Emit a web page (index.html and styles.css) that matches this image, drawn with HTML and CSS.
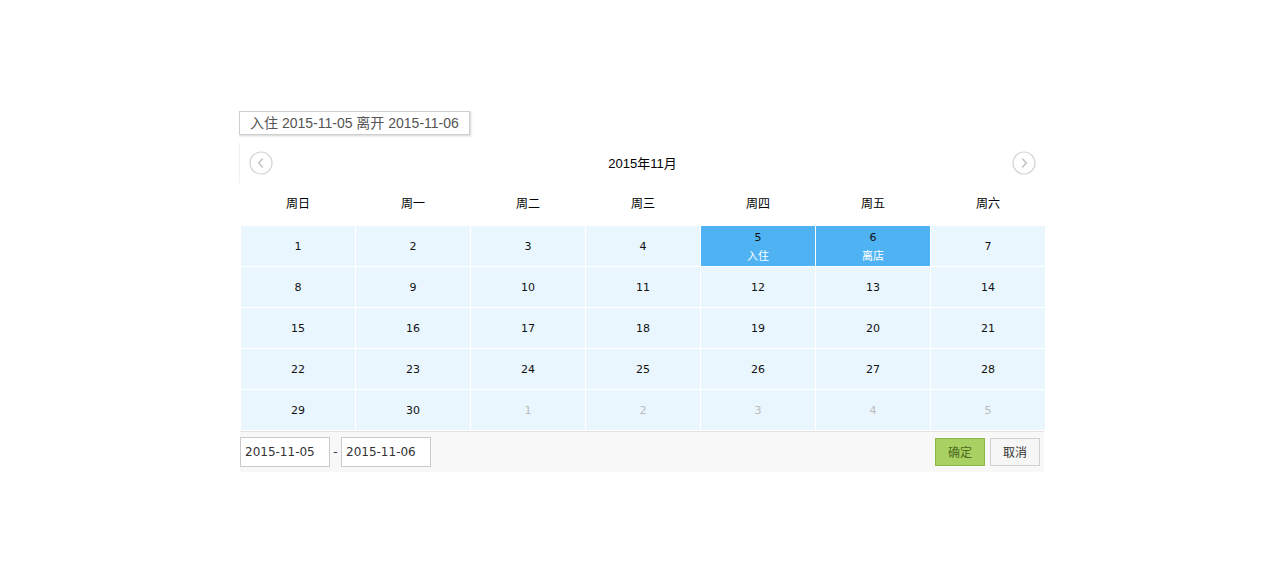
FILE: index.html
```html
<!DOCTYPE html>
<html lang="zh">
<head>
<meta charset="utf-8">
<link rel="stylesheet" href="styles.css">
</head>
<body>
<div class="wrap">
  <div class="trigger">入住 2015-11-05 离开 2015-11-06</div>
  <div class="cal">
    <div class="nav">
      <span class="arrow"><svg width="24" height="24" viewBox="0 0 24 24"><circle cx="12" cy="12" r="11" fill="#fff" stroke="#d6d6d6" stroke-width="1.2"/><path d="M13.8 7.5 L9.8 12 L13.8 16.5" fill="none" stroke="#c4c4c4" stroke-width="1.6"/></svg></span>
      <span class="title">2015年11月</span>
      <span class="arrow"><svg width="24" height="24" viewBox="0 0 24 24"><circle cx="12" cy="12" r="11" fill="#fff" stroke="#d6d6d6" stroke-width="1.2"/><path d="M10.2 7.5 L14.2 12 L10.2 16.5" fill="none" stroke="#c4c4c4" stroke-width="1.6"/></svg></span>
    </div>
    <div class="week">
      <span>周日</span><span>周一</span><span>周二</span><span>周三</span><span>周四</span><span>周五</span><span>周六</span>
    </div>
    <div class="days">
      <div class="d">1</div><div class="d">2</div><div class="d">3</div><div class="d">4</div>
      <div class="d sel">5<span class="tag">入住</span></div>
      <div class="d sel">6<span class="tag">离店</span></div>
      <div class="d">7</div>
      <div class="d">8</div><div class="d">9</div><div class="d">10</div><div class="d">11</div><div class="d">12</div><div class="d">13</div><div class="d">14</div>
      <div class="d">15</div><div class="d">16</div><div class="d">17</div><div class="d">18</div><div class="d">19</div><div class="d">20</div><div class="d">21</div>
      <div class="d">22</div><div class="d">23</div><div class="d">24</div><div class="d">25</div><div class="d">26</div><div class="d">27</div><div class="d">28</div>
      <div class="d">29</div><div class="d">30</div><div class="d off">1</div><div class="d off">2</div><div class="d off">3</div><div class="d off">4</div><div class="d off">5</div>
    </div>
    <div class="foot">
      <div class="range">
        <span class="inp">2015-11-05</span>
        <span class="dash">-</span>
        <span class="inp">2015-11-06</span>
      </div>
      <div class="btns">
        <span class="btn ok">确定</span>
        <span class="btn cancel">取消</span>
      </div>
    </div>
  </div>
</div>
</body>
</html>
```
FILE: styles.css
```css
html, body { margin: 0; padding: 0; background: #fff; }
body { font-family: "DejaVu Sans", "Noto Sans CJK SC", sans-serif; color: #000; }
.wrap { width: 805px; margin: 111px 0 0 240px; }
.trigger {
  display: inline-block;
  margin-left: -1px;
  height: 22px;
  line-height: 22px;
  padding: 0 10px;
  border: 1px solid #cfcfcf;
  box-shadow: 1px 1px 2px rgba(0,0,0,0.18);
  font-family: "Liberation Sans", "Noto Sans CJK SC", sans-serif;
  font-size: 14px;
  color: #555;
}
.cal { margin-top: 8px; }
.nav {
  height: 40px;
  display: flex;
  align-items: center;
  justify-content: space-between;
  padding: 0 9px 2px 9px;
  box-sizing: border-box;
  border-left: 1px solid #f0f0f0;
  margin-left: -1px;
}
.arrow { width: 24px; height: 24px; display: block; margin-top: 2px; }
.arrow svg { display: block; }
.title { font-size: 13px; font-family: "Liberation Sans", "Noto Sans CJK SC", sans-serif; }
.week {
  height: 42px;
  box-sizing: border-box;
  padding-bottom: 4px;
  display: grid;
  grid-template-columns: repeat(7, 114px);
  column-gap: 1px;
  padding-left: 1px;
  align-items: center;
  font-size: 12px;
  font-family: "Noto Sans CJK SC", sans-serif;
}
.week span { text-align: center; }
.days {
  display: grid;
  grid-template-columns: repeat(7, 114px);
  grid-auto-rows: 40px;
  gap: 1px;
  padding: 1px 0 0 1px;
}
.d {
  background: #eaf6fe;
  display: flex;
  flex-direction: column;
  align-items: center;
  justify-content: center;
  font-size: 11px;
  color: #111;
}
.d.sel { background: #4fb3f3; color: #111; justify-content: flex-start; padding-top: 5px; box-sizing: border-box; }
.d .tag { color: #fff; font-size: 11px; font-family: "Noto Sans CJK SC", sans-serif; margin-top: 3px; line-height: 16px; }
.d.off { color: #bbb; }
.foot {
  margin-top: 1px;
  height: 41px;
  border-top: 1px solid #e2e2e2;
  background: #f8f8f8;
  display: flex;
  align-items: center;
  justify-content: space-between;
  box-sizing: border-box;
  padding-right: 4px;
  margin-right: 1px;
}
.range { display: flex; align-items: center; }
.inp {
  display: block;
  width: 84px;
  height: 28px;
  line-height: 28px;
  padding-left: 4px;
  border: 1px solid #cacaca;
  background: #fff;
  font-size: 12px;
  font-family: "DejaVu Sans", sans-serif;
  color: #333;
}
.dash { width: 11px; text-align: center; font-size: 12px; color: #333; }
.btns { display: flex; gap: 5px; }
.btn {
  display: block;
  width: 48px;
  height: 26px;
  line-height: 26px;
  text-align: center;
  font-size: 12px;
  font-family: "Noto Sans CJK SC", sans-serif;
  border: 1px solid;
}
.ok { background: #a9d062; border-color: #8ab746; color: #4d6b1e; }
.cancel { background: #f6f6f6; border-color: #cfcfcf; color: #333; }
```
